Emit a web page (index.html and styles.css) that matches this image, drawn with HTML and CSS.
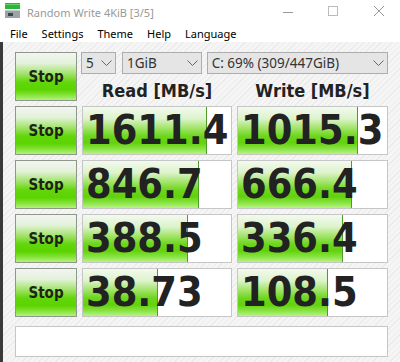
FILE: index.html
```html
<!DOCTYPE html>
<html>

<head>
  <title>Random Write 4KiB [3/5]</title>
  <link rel="stylesheet" href="styles.css">
</head>

<body>
  <div class="window">
    <div class="titlebar">
      <svg class="app-icon" width="16" height="16" viewBox="0 0 16 16">
        <rect x="0" y="0" width="15" height="6" fill="#2bb53a"/>
        <rect x="0" y="1" width="15" height="1" fill="#5fd86a"/>
        <rect x="0" y="7" width="15" height="8" fill="#9aa3a6"/>
        <rect x="0" y="7" width="15" height="1" fill="#c4cacc"/>
        <rect x="3" y="10" width="5" height="3" fill="#3d4447"/>
      </svg>
      <span class="title">Random Write 4KiB [3/5]</span>
      <div class="controls">
        <svg width="46" height="24" viewBox="0 0 46 24"><path d="M21 12.5h10" stroke="#999" fill="none"/></svg>
        <svg width="46" height="24" viewBox="0 0 46 24"><rect x="20.5" y="6.5" width="9" height="9" stroke="#bbb" fill="none"/></svg>
        <svg width="46" height="24" viewBox="0 0 46 24"><path d="M20 6l10 10M30 6l-10 10" stroke="#999" fill="none"/></svg>
      </div>
    </div>

    <div class="menubar">
      <span>File</span>
      <span>Settings</span>
      <span>Theme</span>
      <span>Help</span>
      <span>Language</span>
    </div>

    <div class="main">
      <div class="grid">
        <button class="stop">Stop</button>
        <div class="head">
          <div class="selects">
            <div class="select sel-count"><span>5</span><svg width="11" height="7" viewBox="0 0 11 7"><path d="M0.5 0.5l5 5 5-5" stroke="#666" fill="none"/></svg></div>
            <div class="select sel-size"><span>1GiB</span><svg width="11" height="7" viewBox="0 0 11 7"><path d="M0.5 0.5l5 5 5-5" stroke="#666" fill="none"/></svg></div>
            <div class="select sel-drive"><span>C: 69% (309/447GiB)</span><svg width="11" height="7" viewBox="0 0 11 7"><path d="M0.5 0.5l5 5 5-5" stroke="#666" fill="none"/></svg></div>
          </div>
          <div class="labels">
            <div>Read [MB/s]</div>
            <div>Write [MB/s]</div>
          </div>
        </div>

        <button class="stop">Stop</button>
        <div class="cell"><div class="bar" style="width:124px"></div><span class="num">1611.4</span></div>
        <div class="cell"><div class="bar" style="width:120px"></div><span class="num">1015.3</span></div>

        <button class="stop">Stop</button>
        <div class="cell"><div class="bar" style="width:116px"></div><span class="num">846.7</span></div>
        <div class="cell"><div class="bar" style="width:114px"></div><span class="num">666.4</span></div>

        <button class="stop">Stop</button>
        <div class="cell"><div class="bar" style="width:105px"></div><span class="num">388.5</span></div>
        <div class="cell"><div class="bar" style="width:105px"></div><span class="num">336.4</span></div>

        <button class="stop">Stop</button>
        <div class="cell"><div class="bar" style="width:75px"></div><span class="num">38.73</span></div>
        <div class="cell"><div class="bar" style="width:90px"></div><span class="num">108.5</span></div>
      </div>
      <div class="comment"></div>
    </div>
  </div>
</body>

</html>
```

FILE: styles.css
```css
body {
  margin: 0;
  width: 400px;
  height: 362px;
  overflow: hidden;
  font-family: "Noto Sans", "Open Sans", sans-serif;
}

.window {
  height: 362px;
  display: flex;
  flex-direction: column;
  background: #fff;
}

.titlebar {
  height: 24px;
  display: flex;
  align-items: center;
}

.app-icon {
  margin: 0 6px 2px 5px;
}

.title {
  font-size: 11px;
  color: #999;
  flex: 1;
}

.controls {
  display: flex;
  align-self: flex-start;
}

.menubar {
  height: 18px;
  display: flex;
  align-items: center;
  padding-left: 3px;
  font-size: 11px;
  color: #000;
}

.menubar span {
  padding: 0 7px;
}

.main {
  flex: 1;
  border-left: 3px solid #3a3a3a;
  padding: 10px 0 0 12px;
  background: repeating-linear-gradient(135deg, #f5f5f5 0 3px, #ebebeb 3px 4px);
}

.grid {
  display: grid;
  grid-template-columns: 62px 150px 151px;
  grid-auto-rows: 49px;
  column-gap: 5px;
  row-gap: 5px;
}

.stop {
  margin: 0;
  padding: 0;
  border: 1px solid #8d9889;
  background: linear-gradient(to bottom, #f4f4f4 0%, #e2f2d8 22%, #9fe266 45%, #62d60a 62%, #5cd400 78%, #86e43c 90%, #b4f27e 100%);
  font-family: "DejaVu Sans Condensed", "DejaVu Sans", sans-serif;
  font-weight: bold;
  font-size: 15px;
  color: #1c2414;
}

.head {
  grid-column: 2 / 4;
  display: flex;
  flex-direction: column;
}

.selects {
  height: 22px;
  display: flex;
  gap: 5px;
  margin-left: -1px;
}

.select {
  box-sizing: border-box;
  height: 22px;
  display: flex;
  align-items: center;
  justify-content: space-between;
  padding: 0 3px 0 4px;
  border: 1px solid #adadad;
  background: #e5e5e5;
  font-size: 13.5px;
  color: #333;
}

.sel-count {
  width: 35px;
  margin-right: 1px;
}

.sel-size {
  width: 80px;
}

.sel-drive {
  width: 182px;
}

.labels {
  flex: 1;
  display: grid;
  grid-template-columns: 150px 151px;
  column-gap: 5px;
  padding-top: 6px;
  font-family: "DejaVu Sans Condensed", "DejaVu Sans", sans-serif;
  font-weight: bold;
  font-size: 18px;
  color: #222;
  text-align: center;
}

.cell {
  box-sizing: border-box;
  display: grid;
  border: 1px solid #c6c6c6;
  background: #fff;
  overflow: hidden;
}

.bar {
  grid-area: 1 / 1;
  justify-self: start;
  height: 100%;
  box-sizing: border-box;
  border-right: 1px solid #4f9a2a;
  background: linear-gradient(to bottom, #f3faee 0%, #dcf3cb 25%, #a2e468 45%, #6cd61c 62%, #62d20c 76%, #86e240 88%, #b8f384 100%);
}

.num {
  grid-area: 1 / 1;
  align-self: center;
  padding-left: 3px;
  font-family: "DejaVu Sans Condensed", "DejaVu Sans", sans-serif;
  font-weight: bold;
  font-size: 41px;
  line-height: 47px;
  color: #222;
  white-space: nowrap;
}

.comment {
  box-sizing: border-box;
  width: 373px;
  height: 31px;
  margin-top: 9px;
  border: 1px solid #c6c6c6;
  background: #fff;
}
```
